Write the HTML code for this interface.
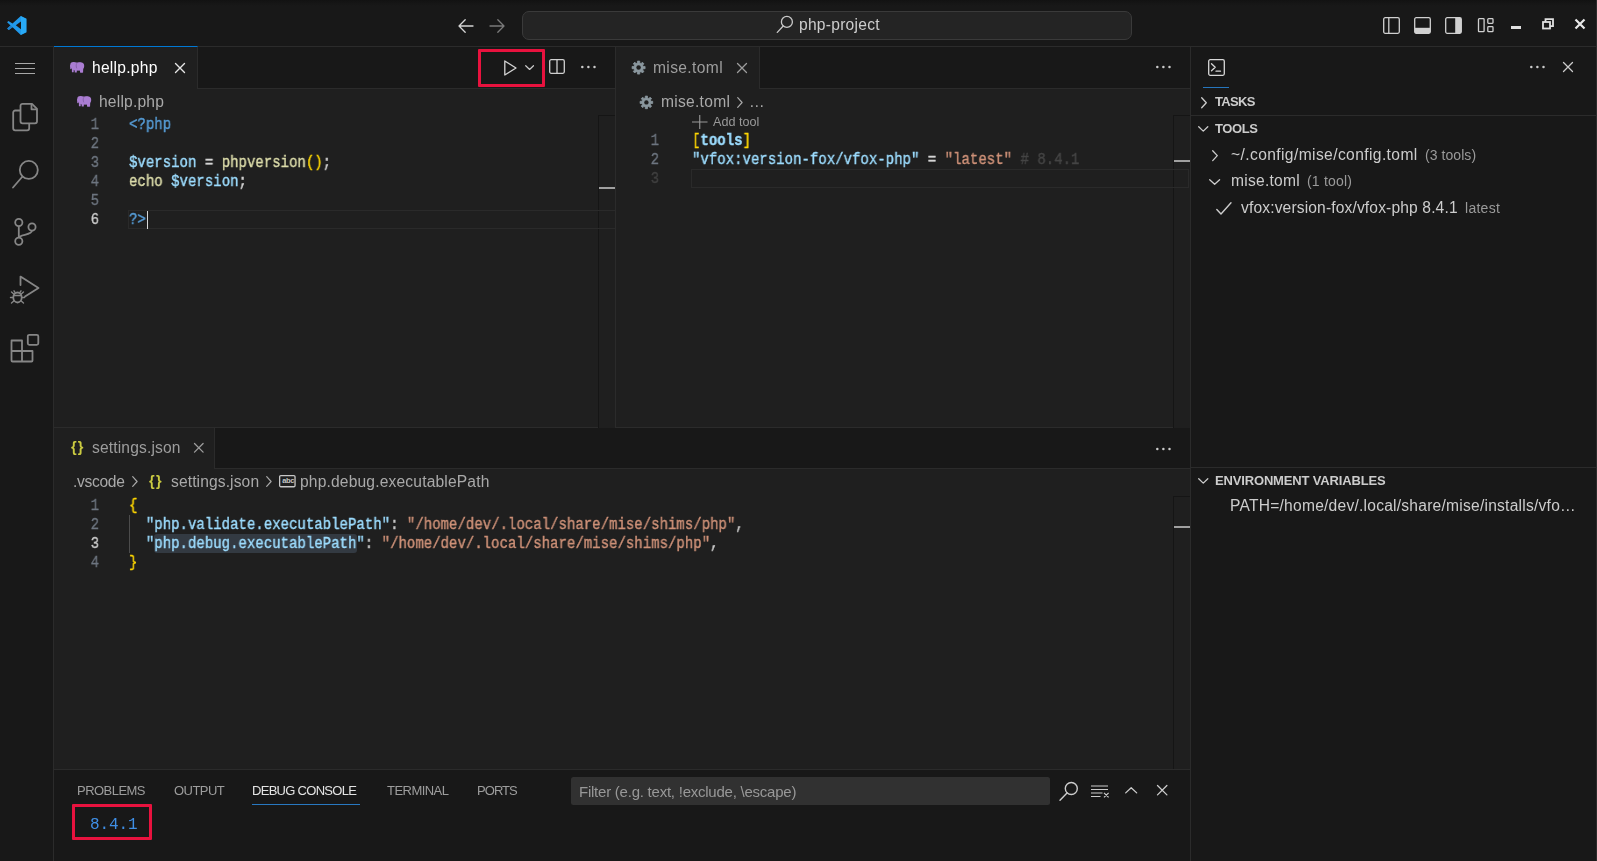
<!DOCTYPE html>
<html>
<head>
<meta charset="utf-8">
<style>
*{box-sizing:border-box;margin:0;padding:0}
html,body{width:1597px;height:861px;overflow:hidden;background:#181818}
body{font-family:"Liberation Sans",sans-serif;font-size:13px;color:#ccc;position:relative}
.abs{position:absolute}
.t{will-change:transform;position:absolute;white-space:pre;line-height:20px;height:20px}
.mono{font-family:"Liberation Mono",monospace;font-size:14px}
.code{will-change:transform;-webkit-text-stroke:0.4px currentColor;position:absolute;white-space:pre;font-family:"Liberation Mono",monospace;font-size:16px;line-height:19px;height:19px;transform:scaleX(0.8771);transform-origin:0 0}
.ln{will-change:transform;-webkit-text-stroke:0.3px currentColor;position:absolute;white-space:pre;font-family:"Liberation Mono",monospace;font-size:16px;line-height:19px;height:19px;color:#6e7681;text-align:right;width:60px;transform:scaleX(0.8771);transform-origin:100% 0}
svg{position:absolute;overflow:visible}
</style>
</head>
<body>
<!-- TITLE BAR -->
<div class="abs" id="titlebar" style="left:0;top:0;width:1597px;height:47px;background:#181818;border-bottom:1px solid #2b2b2b"></div>
<div class="abs" style="left:0;top:0;width:1597px;height:6px;background:linear-gradient(#121212,#161616 60%,#181818)"></div>


<!-- title bar content -->
<svg style="left:7px;top:15.900px" width="19.400" height="19" viewBox="0 0 19.400 19">
 <path d="M13.800 0L19.400 2.800V16.300L13.800 19 5.590 11.300 1.700 14.100 0.200 12.500 3.560 9.400 0.100 6.200 1.400 5 5.530 7.600ZM8.800 9.300L14 13.200V5.400Z" fill="#2199ea" fill-rule="evenodd"/>
 <path d="M5.590 11.300L1.700 14.100 0.200 12.500 3.560 9.400Z" fill="#1b7fcc"/>
 <path d="M13.800 0L19.400 2.800V16.300L13.800 19 14 13.200V5.400Z" fill="#2bb0fb" opacity="0.750"/>
</svg>
<svg style="left:458px;top:19px" width="16" height="14" viewBox="0 0 16 14" fill="none" stroke="#d4d4d4" stroke-width="1.3" stroke-linecap="round" stroke-linejoin="round"><path d="M15 7H1.2M7.2 0.8L1 7l6.2 6.2"/></svg>
<svg style="left:489px;top:19px" width="16" height="14" viewBox="0 0 16 14" fill="none" stroke="#7a7a7a" stroke-width="1.3" stroke-linecap="round" stroke-linejoin="round"><path d="M1 7h13.8M8.8 0.8L15 7l-6.2 6.2"/></svg>
<div class="abs" style="left:522px;top:11px;width:610px;height:29px;border:1px solid #3a3a3a;border-radius:7px;background:#242424"></div>
<!-- layout icons -->
<svg style="left:1383px;top:17px" width="17" height="17" viewBox="0 0 17 17" fill="none" stroke="#d0d0d0" stroke-width="1.3"><rect x="0.7" y="0.7" width="15.6" height="15.6" rx="1.5"/><path d="M5.800 0.7v15.600"/></svg>
<svg style="left:1414px;top:17px" width="17" height="17" viewBox="0 0 17 17" fill="none" stroke="#d0d0d0" stroke-width="1.3"><rect x="0.7" y="0.7" width="15.6" height="15.6" rx="1.5"/><rect x="1" y="10.800" width="15" height="5.200" fill="#d0d0d0" stroke="none"/></svg>
<svg style="left:1445px;top:17px" width="17" height="17" viewBox="0 0 17 17" fill="none" stroke="#d0d0d0" stroke-width="1.3"><rect x="0.7" y="0.7" width="15.6" height="15.6" rx="1.5"/><rect x="10.200" y="1" width="5.800" height="15" fill="#d0d0d0" stroke="none"/></svg>
<svg style="left:1477px;top:17px" width="17" height="17" viewBox="0 0 17 17" fill="none" stroke="#d0d0d0" stroke-width="1.3"><rect x="1.500" y="1.700" width="5.600" height="13" rx="0.800"/><rect x="10.800" y="1.700" width="5.200" height="4.600" rx="0.800"/><rect x="10.800" y="9.600" width="5.200" height="5.100" rx="0.800"/></svg>
<div class="abs" style="left:1510.800px;top:26.300px;width:10.300px;height:2.600px;background:#e0e0e0"></div>
<svg style="left:1542px;top:18px" width="12" height="12" viewBox="0 0 12 12" fill="none" stroke="#e0e0e0" stroke-width="1.8"><rect x="1" y="4" width="7" height="6.5"/><path d="M3.5 4V1.2h7.5v7H8"/></svg>
<svg style="left:1574px;top:18px" width="12" height="12" viewBox="0 0 12 12" fill="none" stroke="#e8e8e8" stroke-width="2.2"><path d="M1.5 1.5l9 9M10.500 1.5l-9 9"/></svg>

<!-- ACTIVITY BAR -->
<div class="abs" id="activity" style="left:0;top:47px;width:54px;height:814px;background:#181818;border-right:1px solid #2b2b2b"></div>


<!-- activity icons -->
<div class="abs" style="left:15px;top:63px;width:20px;height:1.4px;background:#a8a8a8"></div>
<div class="abs" style="left:15px;top:68px;width:20px;height:1.4px;background:#a8a8a8"></div>
<div class="abs" style="left:15px;top:73px;width:20px;height:1.4px;background:#a8a8a8"></div>
<svg style="left:10px;top:100px" width="32" height="34" viewBox="0 0 32 34" fill="none" stroke="#868686" stroke-width="1.8" stroke-linejoin="round"><path d="M10 10.5H5.200a2 2 0 0 0-2 2v15.800a2 2 0 0 0 2 2h12a2 2 0 0 0 2-2V23"/><path d="M12.500 3.800h9.500l5 5v12.500a2 2 0 0 1-2 2H12.500a2 2 0 0 1-2-2V5.800a2 2 0 0 1 2-2z"/><path d="M21.500 4v5.300H27"/></svg>
<svg style="left:10px;top:158px" width="32" height="32" viewBox="0 0 32 32" fill="none" stroke="#868686" stroke-width="1.8" stroke-linecap="round"><circle cx="18.800" cy="11.900" r="9"/><path d="M12.500 18.500L3 29.500"/></svg>
<svg style="left:10px;top:216px" width="32" height="32" viewBox="0 0 32 32" fill="none" stroke="#868686" stroke-width="1.8"><circle cx="8.800" cy="6.500" r="3.600"/><circle cx="8.800" cy="25.300" r="3.600"/><circle cx="22" cy="11" r="3.600"/><path d="M8.800 10.100v11.600M22 14.600c0 5-13.200 3.500-13.200 7.500"/></svg>
<svg style="left:8px;top:272px" width="34" height="34" viewBox="0 0 34 34" fill="none" stroke="#868686" stroke-width="1.800" stroke-linejoin="round" stroke-linecap="round"><path d="M12.500 13V4.600L30.500 16 17 24.500"/><ellipse cx="9.500" cy="25.500" rx="4.200" ry="5"/><path d="M5.300 25.500H2.500M13.700 25.500h2.800M5.800 22L3.500 20M13.200 22l2.300-2M5.800 29l-2.300 2M13.200 29l2.300 2M5.500 23.500h8M7 20.300l-1-1.500M12 20.300l1-1.500" stroke-width="1.400"/></svg>
<svg style="left:8px;top:330px" width="34" height="34" viewBox="0 0 34 34" fill="none" stroke="#868686" stroke-width="1.800" stroke-linejoin="round"><path d="M3.500 10.500h10.500v10.500h10.500v9.500a1 1 0 0 1-1 1H4.500a1 1 0 0 1-1-1v-19a1 1 0 0 1 1-1zM14 21v10.500M3.500 21H14"/><rect x="19.800" y="4.800" width="10.500" height="10" rx="1.500"/></svg>

<!-- EDITOR GROUP 1 -->
<div class="abs" id="g1" style="left:54px;top:47px;width:561px;height:381px;background:#1f1f1f"></div>
<div class="abs" id="g1tabs" style="left:54px;top:47px;width:561px;height:42px;background:#181818;border-bottom:1px solid #2b2b2b"></div>
<div class="abs" id="g1tab" style="left:54px;top:46px;width:144px;height:43px;background:#1f1f1f;border-top:1px solid #0078d4;border-right:1px solid #2b2b2b"></div>

<!-- EDITOR GROUP 2 -->
<div class="abs" id="g2" style="left:615px;top:47px;width:576px;height:381px;background:#1f1f1f;border-left:1px solid #2b2b2b"></div>
<div class="abs" id="g2tabs" style="left:616px;top:47px;width:575px;height:42px;background:#181818;border-bottom:1px solid #2b2b2b"></div>
<div class="abs" id="g2tab" style="left:616px;top:47px;width:144px;height:42px;background:#1f1f1f;border-right:1px solid #2b2b2b"></div>

<!-- EDITOR GROUP 3 (bottom) -->
<div class="abs" id="g3" style="left:54px;top:427px;width:1137px;height:342px;background:#1f1f1f;border-top:1px solid #2b2b2b"></div>
<div class="abs" id="g3tabs" style="left:54px;top:428px;width:1137px;height:41px;background:#181818;border-bottom:1px solid #2b2b2b"></div>
<div class="abs" id="g3tab" style="left:54px;top:428px;width:161px;height:41px;background:#1f1f1f;border-right:1px solid #2b2b2b"></div>

<!-- PANEL -->
<div class="abs" id="panel" style="left:54px;top:769px;width:1137px;height:92px;background:#181818;border-top:1px solid #2b2b2b"></div>

<!-- RIGHT SIDEBAR -->
<div class="abs" id="side" style="left:1190px;top:47px;width:407px;height:814px;background:#181818;border-left:1px solid #2b2b2b"></div>

<svg style="left:776px;top:15px" width="18" height="19" viewBox="0 0 18 19" fill="none" stroke="#c8c8c8" stroke-width="1.300" stroke-linecap="round"><circle cx="10.900" cy="6.900" r="5.500"/><path d="M7.200 11L1.300 17.400"/></svg>
<div class="t" style="left:799.3px;top:15px;font-size:15.6px;color:#cccccc;letter-spacing:0.251px;">php-project</div>
<svg style="left:70px;top:61.8px" width="15" height="11" viewBox="0 0 15 11"><g fill="#aa7dd2"><ellipse cx="3.400" cy="3.300" rx="3.200" ry="3.300"/><ellipse cx="10.300" cy="3.900" rx="3.900" ry="3.700"/><rect x="3" y="0.600" width="8" height="7.600" rx="1"/><rect x="0.200" y="3" width="1.500" height="4.300" rx="0.700"/><rect x="1.900" y="5" width="1.800" height="5.300" rx="0.500"/><rect x="4.700" y="5" width="2.100" height="5.500" rx="0.500"/><rect x="10" y="5" width="3.100" height="5.700" rx="0.600"/><rect x="4.700" y="5" width="8.400" height="3.500"/></g><path d="M6.900 1.200c-0.900 1.300-0.900 3.700-0.100 5.200" stroke="#7a569c" stroke-width="0.700" fill="none"/></svg>
<div class="t" style="left:91.7px;top:58px;font-size:15.6px;color:#ffffff;letter-spacing:0.254px;">hellp.php</div>
<svg style="left:175.0px;top:62.7px" width="10" height="10" viewBox="0 0 10 10" fill="none" stroke="#e6e6e6" stroke-width="1.4" stroke-linecap="round"><path d="M0.5 0.5L9.5 9.5M9.5 0.5L0.5 9.5"/></svg>
<div class="abs" style="left:477.500px;top:49px;width:67.200px;height:37.700px;border:3.100px solid #e8123e;border-radius:1px"></div>
<svg style="left:503.500px;top:60.100px" width="13" height="16" viewBox="0 0 13 16" fill="none" stroke="#d4d4d4" stroke-width="1.3" stroke-linejoin="round"><path d="M0.800 1L12 8 0.800 15z"/></svg>
<svg style="left:524.5px;top:64.9px" width="9.2" height="5.2" viewBox="0 0 9.2 5.2" fill="none" stroke="#cccccc" stroke-width="1.2" stroke-linecap="round" stroke-linejoin="round"><path d="M0.7 0.7L4.6 4.5L8.5 0.7"/></svg>
<svg style="left:549.200px;top:59px" width="16" height="15" viewBox="0 0 16 15" fill="none" stroke="#d0d0d0" stroke-width="1.3"><rect x="0.700" y="0.700" width="14.600" height="13.600" rx="1.500"/><path d="M8 0.700v13.600"/></svg>
<svg style="left:580.7px;top:65.3px" width="16" height="4" viewBox="0 0 16 4" fill="#cccccc"><circle cx="1.30" cy="2" r="1.25"/><circle cx="7.40" cy="2" r="1.25"/><circle cx="13.50" cy="2" r="1.25"/></svg>
<svg style="left:77.2px;top:95.9px" width="15" height="11" viewBox="0 0 15 11"><g fill="#aa7dd2"><ellipse cx="3.400" cy="3.300" rx="3.200" ry="3.300"/><ellipse cx="10.300" cy="3.900" rx="3.900" ry="3.700"/><rect x="3" y="0.600" width="8" height="7.600" rx="1"/><rect x="0.200" y="3" width="1.500" height="4.300" rx="0.700"/><rect x="1.900" y="5" width="1.800" height="5.300" rx="0.500"/><rect x="4.700" y="5" width="2.100" height="5.500" rx="0.500"/><rect x="10" y="5" width="3.100" height="5.700" rx="0.600"/><rect x="4.700" y="5" width="8.400" height="3.500"/></g><path d="M6.900 1.200c-0.900 1.300-0.900 3.700-0.100 5.200" stroke="#7a569c" stroke-width="0.700" fill="none"/></svg>
<div class="t" style="left:99.3px;top:92px;font-size:15.6px;color:#a9a9a9;letter-spacing:0.198px;">hellp.php</div>
<div class="abs" style="left:598px;top:115px;width:17px;height:313px;background:#151515;"></div>
<div class="abs" style="left:599px;top:116px;width:16px;height:312px;background:#1f1f1f;"></div>
<div class="abs" style="left:599px;top:187px;width:16px;height:2px;background:#a0a0a0;"></div>
<div class="abs" style="left:128px;top:210px;width:487px;height:19px;border:1px solid #2a2a2a;border-right:none"></div>
<div class="ln" style="left:38.5px;top:116px;">1</div>
<div class="code" style="left:129.2px;top:116px"><span style="color:#569cd6">&lt;?php</span></div>
<div class="ln" style="left:38.5px;top:135px;">2</div>
<div class="ln" style="left:38.5px;top:154px;">3</div>
<div class="code" style="left:129.2px;top:154px"><span style="color:#9cdcfe">$version</span><span style="color:#d4d4d4"> = </span><span style="color:#dcdcaa">phpversion</span><span style="color:#ffd700">()</span><span style="color:#d4d4d4">;</span></div>
<div class="ln" style="left:38.5px;top:173px;">4</div>
<div class="code" style="left:129.2px;top:173px"><span style="color:#dcdcaa">echo</span><span style="color:#d4d4d4"> </span><span style="color:#9cdcfe">$version</span><span style="color:#d4d4d4">;</span></div>
<div class="ln" style="left:38.5px;top:192px;">5</div>
<div class="ln" style="left:38.5px;top:211px;color:#cccccc">6</div>
<div class="code" style="left:129.2px;top:211px"><span style="color:#569cd6">?&gt;</span></div>
<div class="abs" style="left:146.5px;top:211px;width:1.6px;height:18px;background:#d8d8d8;"></div>
<svg style="left:632.3px;top:61.3px" width="13.2" height="13.2" viewBox="0 0 13.2 13.2"><path d="M13.10 5.47L13.10 7.73L11.22 7.71L10.65 9.08L12.00 10.40L10.40 12.00L9.08 10.65L7.71 11.22L7.73 13.10L5.47 13.10L5.49 11.22L4.12 10.65L2.80 12.00L1.20 10.40L2.55 9.08L1.98 7.71L0.10 7.73L0.10 5.47L1.98 5.49L2.55 4.12L1.20 2.80L2.80 1.20L4.12 2.55L5.49 1.98L5.47 0.10L7.73 0.10L7.71 1.98L9.08 2.55L10.40 1.20L12.00 2.80L10.65 4.12L11.22 5.49Z" fill="#8a979e" stroke="#8a979e" stroke-width="0.8" stroke-linejoin="round"/><circle cx="6.6" cy="6.6" r="2.24" fill="#1f1f1f"/></svg>
<div class="t" style="left:653.0px;top:58px;font-size:15.6px;color:#9d9d9d;letter-spacing:0.362px;">mise.toml</div>
<svg style="left:736.8px;top:62.7px" width="10" height="10" viewBox="0 0 10 10" fill="none" stroke="#9d9d9d" stroke-width="1.3" stroke-linecap="round"><path d="M0.5 0.5L9.5 9.5M9.5 0.5L0.5 9.5"/></svg>
<svg style="left:1155.5px;top:65.3px" width="16" height="4" viewBox="0 0 16 4" fill="#cccccc"><circle cx="1.30" cy="2" r="1.25"/><circle cx="7.40" cy="2" r="1.25"/><circle cx="13.50" cy="2" r="1.25"/></svg>
<svg style="left:639.6px;top:95.8px" width="12.8" height="12.8" viewBox="0 0 12.8 12.8"><path d="M12.70 5.30L12.70 7.50L10.88 7.48L10.33 8.81L11.64 10.08L10.08 11.64L8.81 10.33L7.48 10.88L7.50 12.70L5.30 12.70L5.32 10.88L3.99 10.33L2.72 11.64L1.16 10.08L2.47 8.81L1.92 7.48L0.10 7.50L0.10 5.30L1.92 5.32L2.47 3.99L1.16 2.72L2.72 1.16L3.99 2.47L5.32 1.92L5.30 0.10L7.50 0.10L7.48 1.92L8.81 2.47L10.08 1.16L11.64 2.72L10.33 3.99L10.88 5.32Z" fill="#8a979e" stroke="#8a979e" stroke-width="0.8" stroke-linejoin="round"/><circle cx="6.4" cy="6.4" r="2.18" fill="#1f1f1f"/></svg>
<div class="t" style="left:660.6px;top:92px;font-size:15.6px;color:#a9a9a9;letter-spacing:0.273px;">mise.toml</div>
<svg style="left:737.3px;top:96.5px" width="5.8" height="11" viewBox="0 0 5.8 11" fill="none" stroke="#a9a9a9" stroke-width="1.2" stroke-linecap="round" stroke-linejoin="round"><path d="M0.7 0.7L5.1 5.5L0.7 10.3"/></svg>
<div class="t" style="left:748.6px;top:92px;font-size:15.6px;color:#a9a9a9;letter-spacing:0.000px;">…</div>
<svg style="left:692.200px;top:115.200px" width="15.500" height="14" viewBox="0 0 15.500 14" stroke="#9a9a9a" stroke-width="1.100" fill="none"><path d="M0 7h15.500M7.750 0v14"/></svg>
<div class="t" style="left:713.3px;top:112px;font-size:12.6px;color:#999999;letter-spacing:0.008px;">Add tool</div>
<div class="abs" style="left:1173px;top:115px;width:17px;height:313px;background:#151515;"></div>
<div class="abs" style="left:1174px;top:116px;width:16px;height:312px;background:#1f1f1f;"></div>
<div class="abs" style="left:1174px;top:160px;width:16px;height:2px;background:#a0a0a0;"></div>
<div class="abs" style="left:691px;top:169px;width:498px;height:19px;border:1px solid #2a2a2a"></div>
<div class="ln" style="left:599px;top:132px;">1</div>
<div class="ln" style="left:599px;top:151px;">2</div>
<div class="ln" style="left:599px;top:170px;color:#414141">3</div>
<div class="code" style="left:692px;top:132px"><span style="color:#ffd700">[</span><span style="color:#9cdcfe;font-weight:700">tools</span><span style="color:#ffd700">]</span></div>
<div class="code" style="left:692px;top:151px"><span style="color:#9cdcfe">"vfox:version-fox/vfox-php"</span><span style="color:#d4d4d4"> = </span><span style="color:#ce9178">"latest"</span><span style="color:#454545"> # 8.4.1</span></div>
<div class="t" style="left:71.0px;top:437px;font-size:14.5px;color:#cbcb41;letter-spacing:1.056px;font-weight:700;">{}</div>
<div class="t" style="left:92.2px;top:438px;font-size:15.6px;color:#9d9d9d;letter-spacing:0.145px;">settings.json</div>
<svg style="left:193.5px;top:443.4px" width="9.6" height="9.6" viewBox="0 0 9.6 9.6" fill="none" stroke="#9d9d9d" stroke-width="1.3" stroke-linecap="round"><path d="M0.5 0.5L9.1 9.1M9.1 0.5L0.5 9.1"/></svg>
<svg style="left:1155.5px;top:446.5px" width="16" height="4" viewBox="0 0 16 4" fill="#cccccc"><circle cx="1.30" cy="2" r="1.25"/><circle cx="7.40" cy="2" r="1.25"/><circle cx="13.50" cy="2" r="1.25"/></svg>
<div class="t" style="left:73.3px;top:472px;font-size:15.6px;color:#a9a9a9;letter-spacing:-0.308px;">.vscode</div>
<svg style="left:132px;top:476px" width="5.8" height="11" viewBox="0 0 5.8 11" fill="none" stroke="#a9a9a9" stroke-width="1.2" stroke-linecap="round" stroke-linejoin="round"><path d="M0.7 0.7L5.1 5.5L0.7 10.3"/></svg>
<div class="t" style="left:149.2px;top:471px;font-size:14.5px;color:#cbcb41;letter-spacing:1.456px;font-weight:700;">{}</div>
<div class="t" style="left:170.6px;top:472px;font-size:15.6px;color:#a9a9a9;letter-spacing:0.115px;">settings.json</div>
<svg style="left:265.8px;top:476px" width="5.8" height="11" viewBox="0 0 5.8 11" fill="none" stroke="#a9a9a9" stroke-width="1.2" stroke-linecap="round" stroke-linejoin="round"><path d="M0.7 0.7L5.1 5.5L0.7 10.3"/></svg>
<svg style="left:279.300px;top:474.600px" width="16.700" height="12.400" viewBox="0 0 16.700 12.400" fill="none" stroke="#c8c8c8" stroke-width="1.300"><rect x="0.650" y="0.650" width="15.400" height="11.100" rx="1.200"/></svg>
<div class="abs" style="left:282.200px;top:476.600px;font-size:7.500px;line-height:8px;height:8px;color:#c5c5c5;letter-spacing:-0.300px;font-weight:700;white-space:pre">abc</div>
<div class="t" style="left:300.4px;top:472px;font-size:15.6px;color:#a9a9a9;letter-spacing:0.166px;">php.debug.executablePath</div>
<div class="abs" style="left:1173px;top:496px;width:17px;height:273px;background:#151515;"></div>
<div class="abs" style="left:1174px;top:497px;width:16px;height:272px;background:#1f1f1f;"></div>
<div class="abs" style="left:1174px;top:526px;width:16px;height:2px;background:#a0a0a0;"></div>
<div class="abs" style="left:154.4px;top:534px;width:202.4px;height:19px;background:#333a42;border-radius:3px"></div>
<div class="abs" style="left:129px;top:515px;width:1px;height:38px;background:#4c4c4c;"></div>
<div class="ln" style="left:38.5px;top:497px;">1</div>
<div class="ln" style="left:38.5px;top:516px;">2</div>
<div class="ln" style="left:38.5px;top:535px;color:#cccccc">3</div>
<div class="ln" style="left:38.5px;top:554px;">4</div>
<div class="code" style="left:129.2px;top:497px"><span style="color:#ffd700">{</span></div>
<div class="code" style="left:129.2px;top:516px"><span style="color:#9cdcfe">  "php.validate.executablePath"</span><span style="color:#cccccc">: </span><span style="color:#ce9178">"/home/dev/.local/share/mise/shims/php"</span><span style="color:#cccccc">,</span></div>
<div class="code" style="left:129.2px;top:535px"><span style="color:#9cdcfe">  "php.debug.executablePath"</span><span style="color:#cccccc">: </span><span style="color:#ce9178">"/home/dev/.local/share/mise/shims/php"</span><span style="color:#cccccc">,</span></div>
<div class="code" style="left:129.2px;top:554px"><span style="color:#ffd700">}</span></div>
<div class="t" style="left:76.6px;top:781px;font-size:13px;color:#9d9d9d;letter-spacing:-0.530px;">PROBLEMS</div>
<div class="t" style="left:173.8px;top:781px;font-size:13px;color:#9d9d9d;letter-spacing:-0.540px;">OUTPUT</div>
<div class="t" style="left:252.3px;top:781px;font-size:13px;color:#e4e4e4;letter-spacing:-0.709px;">DEBUG CONSOLE</div>
<div class="t" style="left:387.4px;top:781px;font-size:13px;color:#9d9d9d;letter-spacing:-0.541px;">TERMINAL</div>
<div class="t" style="left:477.4px;top:781px;font-size:13px;color:#9d9d9d;letter-spacing:-0.949px;">PORTS</div>
<div class="abs" style="left:251.5px;top:804px;width:108.5px;height:1.2px;background:#2878c0;"></div>
<div class="abs" style="left:571px;top:777.3px;width:479.3px;height:28.2px;background:#313131;border-radius:2.500px"></div>
<div class="t" style="left:578.5px;top:782px;font-size:15px;color:#989898;letter-spacing:-0.236px;">Filter (e.g. text, !exclude, \escape)</div>
<svg style="left:1059.200px;top:780.700px" width="20" height="20" viewBox="0 0 20 20" fill="none" stroke="#cccccc" stroke-width="1.4" stroke-linecap="round"><circle cx="12.300" cy="7.500" r="6"/><path d="M8 12L1 19.300"/></svg>
<svg style="left:1091.400px;top:784.600px" width="19" height="13" viewBox="0 0 19 13" fill="none" stroke="#cccccc" stroke-width="1.2"><path d="M0 1h17M0 4.500h17M0 8h11.500M0 11.500h9.500M13 7.800l4.600 4.600M17.600 7.800L13 12.400"/></svg>
<svg style="left:1125px;top:786.6px" width="12.4" height="6.6" viewBox="0 0 12.4 6.6" fill="none" stroke="#cccccc" stroke-width="1.3" stroke-linecap="round" stroke-linejoin="round"><path d="M0.7 5.8999999999999995L6.2 0.7L11.700000000000001 5.8999999999999995"/></svg>
<svg style="left:1157.2px;top:785.1px" width="10.4" height="10.4" viewBox="0 0 10.4 10.4" fill="none" stroke="#cccccc" stroke-width="1.3" stroke-linecap="round"><path d="M0.5 0.5L9.9 9.9M9.9 0.5L0.5 9.9"/></svg>
<div class="abs" style="left:72px;top:803.800px;width:79.800px;height:36.500px;border:3.100px solid #e8123e;border-radius:1px"></div>
<div class="t" style="left:90px;top:815.400px;font-family:'Liberation Mono',monospace;font-size:16px;color:#3f8fe6;letter-spacing:-0.100px">8.4.1</div>
<svg style="left:1207.500px;top:58.900px" width="17" height="17" viewBox="0 0 17 17" fill="none" stroke="#d7d7d7" stroke-width="1.300" stroke-linejoin="round" stroke-linecap="round"><rect x="0.700" y="0.700" width="15.600" height="15.600" rx="1.500"/><path d="M3.500 4.800L7.200 8.300 3.500 11.800M8 12.200h4.500"/></svg>
<div class="abs" style="left:1203.3px;top:87px;width:26px;height:1px;background:#2676bd;"></div>
<svg style="left:1529.8px;top:65.3px" width="16" height="4" viewBox="0 0 16 4" fill="#cccccc"><circle cx="1.30" cy="2" r="1.25"/><circle cx="7.40" cy="2" r="1.25"/><circle cx="13.50" cy="2" r="1.25"/></svg>
<svg style="left:1563.4px;top:62.2px" width="10" height="10" viewBox="0 0 10 10" fill="none" stroke="#cccccc" stroke-width="1.3" stroke-linecap="round"><path d="M0.5 0.5L9.5 9.5M9.5 0.5L0.5 9.5"/></svg>
<svg style="left:1201px;top:96.5px" width="6" height="11.5" viewBox="0 0 6 11.5" fill="none" stroke="#cccccc" stroke-width="1.3" stroke-linecap="round" stroke-linejoin="round"><path d="M0.7 0.7L5.3 5.75L0.7 10.8"/></svg>
<div class="t" style="left:1215.0px;top:92px;font-size:13px;color:#cccccc;letter-spacing:-0.659px;font-weight:700;">TASKS</div>
<div class="abs" style="left:1191px;top:115px;width:405px;height:1px;background:#2b2b2b;"></div>
<svg style="left:1197.8px;top:126px" width="10.5" height="5.8" viewBox="0 0 10.5 5.8" fill="none" stroke="#cccccc" stroke-width="1.3" stroke-linecap="round" stroke-linejoin="round"><path d="M0.7 0.7L5.25 5.1L9.8 0.7"/></svg>
<div class="t" style="left:1215.0px;top:119px;font-size:13px;color:#cccccc;letter-spacing:-0.388px;font-weight:700;">TOOLS</div>
<svg style="left:1212px;top:150.4px" width="6" height="11.3" viewBox="0 0 6 11.3" fill="none" stroke="#cccccc" stroke-width="1.3" stroke-linecap="round" stroke-linejoin="round"><path d="M0.7 0.7L5.3 5.65L0.7 10.600000000000001"/></svg>
<div class="t" style="left:1231.1px;top:145px;font-size:15.6px;color:#cccccc;letter-spacing:0.395px;">~/.config/mise/config.toml</div>
<div class="t" style="left:1424.6px;top:145px;font-size:14px;color:#9a9a9a;letter-spacing:0.059px;">(3 tools)</div>
<svg style="left:1208.5px;top:178.8px" width="11.3" height="6" viewBox="0 0 11.3 6" fill="none" stroke="#cccccc" stroke-width="1.3" stroke-linecap="round" stroke-linejoin="round"><path d="M0.7 0.7L5.65 5.3L10.600000000000001 0.7"/></svg>
<div class="t" style="left:1231.4px;top:171px;font-size:15.6px;color:#cccccc;letter-spacing:0.251px;">mise.toml</div>
<div class="t" style="left:1307.3px;top:171px;font-size:14px;color:#9a9a9a;letter-spacing:0.191px;">(1 tool)</div>
<svg style="left:1215.500px;top:201.500px" width="16" height="13" viewBox="0 0 16 13" fill="none" stroke="#cccccc" stroke-width="1.400" stroke-linecap="round" stroke-linejoin="round"><path d="M0.800 7.500L5 12 15 0.800"/></svg>
<div class="t" style="left:1240.7px;top:198px;font-size:15.6px;color:#cccccc;letter-spacing:0.141px;">vfox:version-fox/vfox-php 8.4.1</div>
<div class="t" style="left:1465.2px;top:198px;font-size:14px;color:#9a9a9a;letter-spacing:0.273px;">latest</div>
<div class="abs" style="left:1191px;top:467px;width:405px;height:1px;background:#2b2b2b;"></div>
<svg style="left:1198.2px;top:478px" width="10.5" height="5.8" viewBox="0 0 10.5 5.8" fill="none" stroke="#cccccc" stroke-width="1.3" stroke-linecap="round" stroke-linejoin="round"><path d="M0.7 0.7L5.25 5.1L9.8 0.7"/></svg>
<div class="t" style="left:1215.0px;top:471px;font-size:13px;color:#cccccc;letter-spacing:-0.158px;font-weight:700;">ENVIRONMENT VARIABLES</div>
<div class="t" style="left:1229.7px;top:496px;font-size:15.6px;color:#cccccc;letter-spacing:0.231px;">PATH=/home/dev/.local/share/mise/installs/vfo…</div>
<div class="abs" style="left:1596px;top:0px;width:1px;height:861px;background:#2c2c2c;"></div>
</body>
</html>
